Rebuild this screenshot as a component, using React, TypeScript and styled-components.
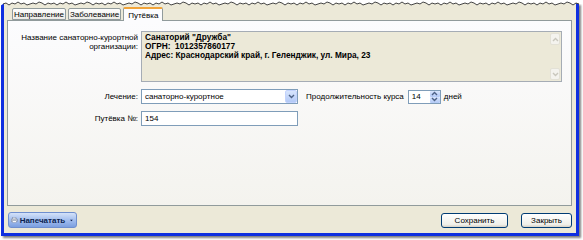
import React from 'react';
import styled, { createGlobalStyle } from 'styled-components';

const Global = createGlobalStyle`
  html, body { margin: 0; padding: 0; background: #fff; }
  body { font-family: "Liberation Sans", Arial, sans-serif; font-size: 8px; color: #000; }
`;

const Frame = styled.div`
  width: 583px;
  height: 240px;
  position: relative;
  overflow: hidden;
  background: #fff;
  padding: 3px 4px 4px 1px;
  box-sizing: border-box;
`;

const Window = styled.div`
  width: 578px;
  height: 233px;
  box-sizing: border-box;
  background: #ece9d8;
  border: 3px solid #0f2fe0;
  border-top: none;
  box-shadow: 2px 2px 2px rgba(0, 0, 0, 0.5);
  padding: 3px 4px 0 3px;
  display: flex;
  flex-direction: column;
`;

const Tear = styled.svg`
  position: absolute;
  left: 0;
  top: 0;
`;

const TabBar = styled.div`
  display: flex;
  align-items: flex-end;
  padding-left: 5px;
  height: 14px;
  gap: 2px;
`;

const Tab = styled.div<{ $active?: boolean }>`
  height: ${p => (p.$active ? 14 : 12)}px;
  padding: 0 ${p => (p.$active ? 4 : 1)}px;
  box-sizing: border-box;
  display: flex;
  align-items: center;
  border: 1px solid #919b9c;
  border-bottom: ${p => (p.$active ? 'none' : '1px solid #919b9c')};
  border-top: ${p => (p.$active ? '2px solid #f1a43a' : '1px solid #919b9c')};
  border-radius: 2px 2px 0 0;
  background: ${p => (p.$active ? '#fcfcfe' : 'linear-gradient(#fefefe, #ecebe6)')};
  margin-bottom: ${p => (p.$active ? '-1px' : '0')};
  position: relative;
  z-index: ${p => (p.$active ? 1 : 0)};
`;

const Panel = styled.div`
  height: 186px;
  box-sizing: border-box;
  border: 1px solid #919b9c;
  background: linear-gradient(#fcfcfe, #f4f3ee);
  padding: 10px 9px 0 0;
  display: grid;
  grid-template-columns: 130px 1fr;
  column-gap: 3px;
  row-gap: 7px;
  align-content: start;
`;

const Label = styled.div<{ $top?: boolean }>`
  text-align: right;
  align-self: ${p => (p.$top ? 'start' : 'center')};
  padding-top: ${p => (p.$top ? '2px' : '0')};
  line-height: 9px;
`;

const Memo = styled.div`
  height: 51px;
  box-sizing: border-box;
  border: 1px solid #a5acb5;
  background: #ece9d8;
  display: flex;
  font-weight: bold;
  font-size: 8.3px;
  line-height: 9px;
`;

const MemoText = styled.div`
  flex: 1;
  padding: 1px 3px;
  white-space: pre;
`;

const ScrollBar = styled.div`
  width: 10px;
  display: flex;
  flex-direction: column;
  justify-content: space-between;
  padding: 1px;
`;

const ScrollBtn = styled.div`
  height: 10px;
  border: 1px solid #e3e1d6;
  border-radius: 2px;
  background: #f4f3ee;
  display: flex;
  align-items: center;
  justify-content: center;
`;

const Row = styled.div`
  display: flex;
  align-items: center;
`;

const Field = styled.div<{ $w: number }>`
  width: ${p => p.$w}px;
  height: 15px;
  box-sizing: border-box;
  border: 1px solid #7f9db9;
  background: #fff;
  display: flex;
  align-items: center;
  padding-left: 3px;
`;

const FieldText = styled.span`
  flex: 1;
`;

const DropBtn = styled.div`
  width: 12px;
  height: 13px;
  background: linear-gradient(#d8e5fd, #b2c9f6);
  border: 1px solid #c3d3fd;
  border-radius: 2px;
  box-sizing: border-box;
  display: flex;
  align-items: center;
  justify-content: center;
`;

const Caption = styled.span<{ $ml: number }>`
  margin-left: ${p => p.$ml}px;
`;

const Spin = styled.div`
  width: 33px;
  height: 14px;
  margin-left: 4px;
  box-sizing: border-box;
  border: 1px solid #7f9db9;
  background: #fff;
  display: flex;
  align-items: center;
  padding-left: 3px;
`;

const SpinBtns = styled.div`
  width: 10px;
  height: 12px;
  display: flex;
  flex-direction: column;
`;

const SpinBtn = styled.div`
  flex: 1;
  background: linear-gradient(#d8e5fd, #b2c9f6);
  border-radius: 1px;
  display: flex;
  align-items: center;
  justify-content: center;
`;

const Footer = styled.div`
  flex: 1;
  display: flex;
  align-items: center;
  padding: 1px 0 0 1px;
`;

const PrintBtn = styled.div`
  height: 16px;
  width: 69px;
  box-sizing: border-box;
  border-radius: 3px;
  border: 1px solid #6f8fcf;
  background: linear-gradient(#d4e2f9, #9fbbed 55%, #7c9fe0);
  display: flex;
  align-items: center;
  gap: 2px;
  padding: 0 3px 0 2px;
  font-weight: bold;
  color: #0b1f4f;
`;

const Spacer = styled.div`
  flex: 1;
`;

const Button = styled.div<{ $w: number }>`
  width: ${p => p.$w}px;
  height: 15px;
  box-sizing: border-box;
  border: 1px solid #003c74;
  border-radius: 3px;
  background: linear-gradient(#ffffff, #f0f0ea 80%, #d6d0c5);
  display: flex;
  align-items: center;
  justify-content: center;
  margin-left: 13px;
`;

const Chevron = ({ up, color = '#4d6185' }: { up?: boolean; color?: string }) => (
  <svg width="7" height="5" viewBox="0 0 7 5">
    <path d={up ? 'M1 4 L3.5 1.5 L6 4' : 'M1 1 L3.5 3.5 L6 1'} stroke={color} strokeWidth="1.4" fill="none" />
  </svg>
);

const TearEdge = () => {
  const pts: string[] = [];
  const ys = [4, 3, 5, 3, 4, 2, 4, 3, 5, 4, 3, 4, 2, 3, 5, 3];
  for (let x = 3, i = 0; x <= 580; x += 3, i++) pts.push(`${x},${ys[i % ys.length]}`);
  return (
    <Tear width="583" height="8" viewBox="0 0 583 8">
      <polygon points={`0,0 583,0 583,4 ${[...pts].reverse().join(' ')} 0,6`} fill="#fff" />
      <polyline points={pts.join(' ')} fill="none" stroke="#444" strokeWidth="1" />
    </Tear>
  );
};

const Printer = () => (
  <svg width="12" height="10" viewBox="0 0 12 10">
    <rect x="3" y="0.5" width="6" height="3" fill="#fff" stroke="#7b8aa8" strokeWidth="0.8" />
    <rect x="0.5" y="3" width="11" height="5" rx="1" fill="#c9cfd9" stroke="#5d6880" strokeWidth="0.8" />
    <rect x="2.5" y="6.5" width="7" height="3" fill="#fff" stroke="#7b8aa8" strokeWidth="0.8" />
  </svg>
);

function App() {
  return (
    <>
      <Global />
      <Frame>
        <Window>
          <TabBar>
            <Tab>Направление</Tab>
            <Tab>Заболевание</Tab>
            <Tab $active>Путёвка</Tab>
          </TabBar>
          <Panel>
            <Label $top>Название санаторно-курортной<br />организации:</Label>
            <Memo>
              <MemoText>{'Санаторий "Дружба"\nОГРН:  1012357860177\nАдрес: Краснодарский край, г. Геленджик, ул. Мира, 23'}</MemoText>
              <ScrollBar>
                <ScrollBtn><Chevron up color="#c9c7bd" /></ScrollBtn>
                <ScrollBtn><Chevron color="#c9c7bd" /></ScrollBtn>
              </ScrollBar>
            </Memo>
            <Label>Лечение:</Label>
            <Row>
              <Field $w={157}>
                <FieldText>санаторно-курортное</FieldText>
                <DropBtn><Chevron /></DropBtn>
              </Field>
              <Caption $ml={8}>Продолжительность курса</Caption>
              <Spin>
                <FieldText>14</FieldText>
                <SpinBtns>
                  <SpinBtn><Chevron up /></SpinBtn>
                  <SpinBtn><Chevron /></SpinBtn>
                </SpinBtns>
              </Spin>
              <Caption $ml={3}>дней</Caption>
            </Row>
            <Label>Путёвка №:</Label>
            <Row>
              <Field $w={157}>
                <FieldText>154</FieldText>
              </Field>
            </Row>
          </Panel>
          <Footer>
            <PrintBtn>
              <Printer />
              <span>Напечатать</span>
              <svg width="5" height="3" viewBox="0 0 5 3" style={{ marginLeft: 3 }}>
                <path d="M0 0 H5 L2.5 3 Z" fill="#0b1f4f" />
              </svg>
            </PrintBtn>
            <Spacer />
            <Button $w={67}>Сохранить</Button>
            <Button $w={51}>Закрыть</Button>
          </Footer>
        </Window>
        <TearEdge />
      </Frame>
    </>
  );
}

export default App;
